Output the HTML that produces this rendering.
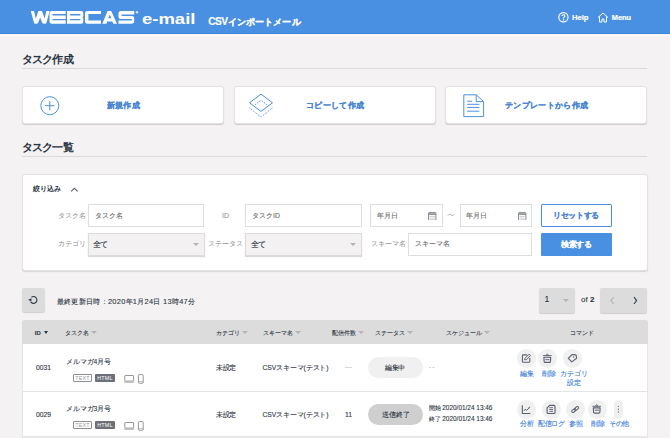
<!DOCTYPE html>
<html><head><meta charset="utf-8">
<style>
*{box-sizing:border-box;margin:0;padding:0}
html,body{width:670px;height:438px;overflow:hidden}
body{background:#f4f2f2;font-family:"Liberation Sans",sans-serif;color:#2b3442;position:relative}
.a{position:absolute;white-space:nowrap}
.hdr{left:0;top:0;width:670px;height:34px;background:#4a90e2;border-bottom:1px solid #3f89e0}
.h2{font-size:11px;letter-spacing:-.7px;font-weight:bold;color:#2a3341;line-height:11px}
.rule{height:1px;background:#dbd9d9;left:22px;width:625.2px}
.card{background:#fff;border-radius:3px;border:1px solid #e3e1e1;box-shadow:0 1px 1px rgba(0,0,0,.16);height:37.8px;top:86px;width:202px}
.ct{font-size:8px;letter-spacing:.35px;-webkit-text-stroke:.15px #4a84d6;font-weight:bold;color:#4a84d6;line-height:9px}
.panel{left:22.3px;top:174px;width:625.5px;height:96.5px;background:#fff;border-radius:3px;border:1px solid #e3e1e1;box-shadow:0 1px 1px rgba(0,0,0,.12)}
.lbl{font-size:6.9px;color:#8a8a8a;line-height:8px}
.inp{background:#fff;border:1px solid #dedede;height:23px}
.sel{background:#f3f1f1;border:1px solid #dcdcdc;height:23px;box-shadow:0 1px 1px rgba(0,0,0,.15)}
.ph{font-size:6.9px;color:#646464;line-height:8px;-webkit-text-stroke:.08px #646464}
.tri{width:0;height:0;border-left:3px solid transparent;border-right:3px solid transparent;border-top:3px solid #b4b4b4}
.th{font-size:6.4px;color:#333c48;line-height:8px;-webkit-text-stroke:.12px #333c48}
.td{font-size:6.8px;color:#2b3442;line-height:8px;-webkit-text-stroke:.1px #2b3442}
.cmd{font-size:6.6px;color:#3d7fd9;line-height:8px;-webkit-text-stroke:.12px #3d7fd9}
.circ{width:19px;height:19px;border-radius:50%;background:#f1f0f0}
</style></head><body>

<!-- header -->
<div class="a hdr"></div>
<div class="a" style="left:0;top:35px;width:670px;height:1px;background:#fdfcf8"></div>
<svg class="a" style="left:0;top:0" width="300" height="34" viewBox="0 0 300 34">
  <g fill="#fff">
    <!-- W -->
    <path d="M30.8 11 L34 11 L35.8 18.4 L38.4 11.1 L42 11.1 L44.6 18.4 L46.4 11 L49.6 11 L46.6 22.2 Q46.2 23.7 44.9 23.7 L43.6 23.7 Q42.5 23.7 42.1 22.6 L40.2 17.6 L38.3 22.6 Q37.9 23.7 36.8 23.7 L35.5 23.7 Q34.2 23.7 33.8 22.2 Z"/>
    <!-- E -->
    <path d="M52 11 L65.7 11 L65.7 14 L52.4 14 L52.4 15.4 L65.7 15.4 L65.7 18.9 L52.4 18.9 L52.4 20.3 L65.7 20.3 L65.7 23.7 L52 23.7 Q49.5 23.7 49.5 21.2 L49.5 13.5 Q49.5 11 52 11 Z"/>
    <!-- B -->
    <path d="M67 11 L81 11 Q83.3 11 83.3 13.3 L83.3 15.5 Q83.3 16.8 82.4 17.3 Q83.3 17.8 83.3 19.1 L83.3 21.4 Q83.3 23.7 81 23.7 L67 23.7 Z M70.1 14 L70.1 15.4 L80.4 15.4 L80.4 14 Z M70.1 18.9 L70.1 20.3 L80.4 20.3 L80.4 18.9 Z" fill-rule="evenodd"/>
    <!-- C -->
    <path d="M87.5 11 L101 11 L101 14 L88.4 14 L88.4 20.5 L101 20.5 L101 23.7 L87.5 23.7 Q85 23.7 85 21.2 L85 13.5 Q85 11 87.5 11 Z"/>
    <!-- A -->
    <path d="M107.6 11 L111.2 11 L117 23.7 L113.3 23.7 L112.4 21.4 L107.3 21.4 L106.4 23.7 L102.3 23.7 Z M108.3 18.2 L111.3 18.2 L109.8 14.6 Z" fill-rule="evenodd"/>
    <!-- S -->
    <path d="M121 11 L134.2 11 L134.2 14.6 L121.6 14.6 L121.6 16 L131.8 16 Q134.2 16 134.2 18.4 L134.2 21.3 Q134.2 23.7 131.8 23.7 L118.5 23.7 L118.5 20.5 L131.8 20.5 L131.8 19 L121 19 Q118.5 19 118.5 16.5 L118.5 13.5 Q118.5 11 121 11 Z"/>
    <circle cx="137" cy="12.2" r="1.25" fill="#d4e4f8"/>
  </g>
</svg>
<div class="a" style="left:141.5px;top:11.3px;font-size:14px;font-weight:bold;color:#fff;line-height:16px;transform:scaleX(1.32);transform-origin:0 0">e-mail</div>
<div class="a" style="left:208.2px;top:15.5px;font-size:9.4px;font-weight:bold;color:#fff;-webkit-text-stroke:.15px #fff;line-height:11px"><span style="font-size:10.2px;letter-spacing:-.55px">CSV</span><span style="letter-spacing:.15px">インポートメール</span></div>
<svg class="a" style="left:557px;top:11px" width="13" height="13" viewBox="0 0 13 13"><circle cx="6.4" cy="6.2" r="4.65" fill="none" stroke="#fff" stroke-width="1.15"/><path d="M5 5.1 Q5 3.75 6.45 3.75 Q7.9 3.75 7.9 5 Q7.9 5.8 7.05 6.2 Q6.45 6.5 6.45 7.4" fill="none" stroke="#fff" stroke-width="1.2"/><circle cx="6.45" cy="8.8" r=".7" fill="#fff"/></svg>
<div class="a" style="left:572px;top:13px;font-size:7.6px;font-weight:bold;color:#fff;-webkit-text-stroke:.2px #fff;line-height:9px">Help</div>
<svg class="a" style="left:597px;top:12px" width="12" height="11" viewBox="0 0 12 11"><path d="M1 5.5 L6 1 L11 5.5 M2.5 4.5 V10 H5 V7 H7 V10 H9.5 V4.5" fill="none" stroke="#fff" stroke-width="1" stroke-linejoin="round"/></svg>
<div class="a" style="left:611.8px;top:13px;font-size:7.4px;font-weight:bold;color:#fff;-webkit-text-stroke:.2px #fff;line-height:9px">Menu</div>

<!-- section 1 -->
<div class="a h2" style="left:21.5px;top:53.5px">タスク作成</div>
<div class="a rule" style="top:68px"></div>

<div class="a card" style="left:22px"></div>
<div class="a card" style="left:233.5px"></div>
<div class="a card" style="left:445.3px"></div>
<svg class="a" style="left:38px;top:94px" width="24" height="24" viewBox="0 0 24 24"><circle cx="11.8" cy="11.7" r="9" fill="none" stroke="#4a90e2" stroke-width="1"/><path d="M7.2 11.7 H16.4 M11.8 7.1 V16.3" stroke="#4a90e2" stroke-width="1"/></svg>
<div class="a ct" style="left:106.5px;top:101px">新規作成</div>
<svg class="a" style="left:246px;top:91px" width="30" height="30" viewBox="0 0 30 30"><path d="M15 3.1 L26.5 11.8 L15 20.4 L3.5 11.8 Z" fill="none" stroke="#4a90e2" stroke-width="1"/><path d="M9.2 13.6 L15 9.4 L20.8 13.6 M3.5 16.7 L15 26.2 L26.5 16.7" fill="none" stroke="#4a90e2" stroke-width="1" stroke-dasharray="1.1 1.1"/></svg>
<div class="a ct" style="left:306px;top:101px">コピーして作成</div>
<svg class="a" style="left:460px;top:92px" width="28" height="28" viewBox="0 0 28 28"><path d="M3.8 2.8 H16.2 L23.6 9.6 V24.6 H3.8 Z M16.2 2.8 V9.6 H23.6" fill="none" stroke="#4a90e2" stroke-width="1" stroke-linejoin="round"/><path d="M7.1 9.2 H12 M7.1 12.3 H19.4 M7.1 15.4 H19.4 M7.1 19.2 H19.4" stroke="#4a90e2" stroke-width="1"/></svg>
<div class="a ct" style="left:505px;top:101px">テンプレートから作成</div>

<!-- section 2 -->
<div class="a h2" style="left:21.5px;top:141.5px">タスク一覧</div>
<div class="a rule" style="top:156px"></div>

<div class="a panel"></div>
<div class="a" style="left:33px;top:185.2px;font-size:7px;font-weight:bold;color:#2b3442;line-height:8px">絞り込み</div>
<svg class="a" style="left:70px;top:185.5px" width="9" height="7" viewBox="0 0 9 7"><path d="M1.2 5.4 L4.4 2.2 L7.6 5.4" fill="none" stroke="#505864" stroke-width="1.15"/></svg>

<div class="a lbl" style="left:57.5px;top:211.5px">タスク名</div>
<div class="a inp" style="left:88px;top:204px;width:116px"></div>
<div class="a ph" style="left:95px;top:211.5px">タスク名</div>
<div class="a lbl" style="left:222px;top:211.5px">ID</div>
<div class="a inp" style="left:244.8px;top:204px;width:117.2px"></div>
<div class="a ph" style="left:252px;top:211.5px">タスクID</div>
<div class="a inp" style="left:370px;top:204px;width:72.5px"></div>
<div class="a ph" style="left:376.5px;top:211.5px">年月日</div>
<svg class="a" style="left:427px;top:211px" width="10" height="9" viewBox="0 0 10 9"><rect x="1.5" y="1.6" width="7.4" height="7.6" rx=".6" fill="none" stroke="#868b93" stroke-width="1"/><path d="M1.5 3.1 H8.9" stroke="#868b93" stroke-width="1.6"/><path d="M3.2 .9 V2 M7.2 .9 V2" stroke="#868b93" stroke-width=".9"/><path d="M2.6 5.5 H7.8 M2.6 7.2 H7.8" stroke="#c4c6ca" stroke-width=".8"/></svg>
<svg class="a" style="left:446px;top:211px" width="10" height="8" viewBox="0 0 10 8"><path d="M2 4.5 C3 3 4 3 5 3.9 C6 4.8 7 4.8 8 3.4" fill="none" stroke="#8d8d8d" stroke-width=".75"/></svg>
<div class="a inp" style="left:460px;top:204px;width:71.5px"></div>
<div class="a ph" style="left:466px;top:211.5px">年月日</div>
<svg class="a" style="left:517px;top:211px" width="10" height="9" viewBox="0 0 10 9"><rect x="1.5" y="1.6" width="7.4" height="7.6" rx=".6" fill="none" stroke="#868b93" stroke-width="1"/><path d="M1.5 3.1 H8.9" stroke="#868b93" stroke-width="1.6"/><path d="M3.2 .9 V2 M7.2 .9 V2" stroke="#868b93" stroke-width=".9"/><path d="M2.6 5.5 H7.8 M2.6 7.2 H7.8" stroke="#c4c6ca" stroke-width=".8"/></svg>
<div class="a" style="left:541px;top:204px;width:71px;height:23px;border:1px solid #4a90e2;background:#fff;border-radius:1px"></div>
<div class="a" style="left:553px;top:212px;font-size:8px;letter-spacing:-.35px;font-weight:bold;color:#4a84d6;-webkit-text-stroke:.1px #4a84d6;line-height:8px">リセットする</div>

<div class="a lbl" style="left:57.5px;top:240px">カテゴリ</div>
<div class="a sel" style="left:88px;top:233px;width:117px"></div>
<div class="a td" style="left:93.2px;top:240.5px;font-size:8px;letter-spacing:-.8px">全て</div>
<div class="a tri" style="left:192.5px;top:243px"></div>
<div class="a lbl" style="left:207.5px;top:240px">ステータス</div>
<div class="a sel" style="left:244.8px;top:233px;width:117.7px"></div>
<div class="a td" style="left:250.5px;top:240.5px;font-size:8px;letter-spacing:-.8px">全て</div>
<div class="a tri" style="left:350px;top:243px"></div>
<div class="a lbl" style="left:370.5px;top:240px">スキーマ名</div>
<div class="a inp" style="left:407.5px;top:233px;width:124px"></div>
<div class="a ph" style="left:414.5px;top:240px">スキーマ名</div>
<div class="a" style="left:541px;top:233px;width:71px;height:22.5px;background:#4a90e2;border-radius:1px"></div>
<div class="a" style="left:561px;top:241px;font-size:8px;letter-spacing:-.35px;font-weight:bold;color:#fff;-webkit-text-stroke:.1px #fff;line-height:8px">検索する</div>

<!-- toolbar -->
<div class="a" style="left:22px;top:288px;width:23px;height:24px;background:#dcdcdc;border-radius:2px;box-shadow:0 1px 1px rgba(0,0,0,.15)"></div>
<svg class="a" style="left:0;top:280px" width="60" height="40" viewBox="0 280 60 40"><path d="M31.4 297.2 A3.45 3.45 0 1 1 30.6 301.9" fill="none" stroke="#2c3846" stroke-width="1.1"/><path d="M28.1 299.7 L31.5 298.2 L31.3 301.5 Z" fill="#2c3846"/></svg>
<div class="a td" style="left:56.8px;top:297.5px;font-size:7.4px;letter-spacing:.3px">最終更新日時：2020年1月24日 13時47分</div>

<div class="a" style="left:539px;top:288px;width:35.5px;height:25px;background:#dcdcdc;border-radius:2px;box-shadow:0 1px 1px rgba(0,0,0,.15)"></div>
<div class="a td" style="left:544.6px;top:294.8px;font-size:8.6px;line-height:9px">1</div>
<div class="a tri" style="left:563px;top:299px"></div>
<div class="a td" style="left:581px;top:295px;font-size:8px;line-height:9px">of <b>2</b></div>
<div class="a" style="left:600px;top:288px;width:47px;height:25px;background:#dcdcdc;border-radius:2px;box-shadow:0 1px 1px rgba(0,0,0,.15)"></div>
<svg class="a" style="left:607px;top:295px" width="34" height="11" viewBox="0 0 34 11"><path d="M6.6 2.2 L4 5.6 L6.6 9" fill="none" stroke="#b4b6ba" stroke-width="1.2"/><path d="M27 2.2 L29.6 5.6 L27 9" fill="none" stroke="#3a4656" stroke-width="1.2"/></svg>

<!-- table -->
<div class="a" style="left:22px;top:343px;width:625.5px;height:95px;background:#fff;border-left:1px solid #e6e6e6;border-right:1px solid #e6e6e6"></div>
<div class="a" style="left:22px;top:320px;width:625.5px;height:23.8px;background:#dcdcdc;border-radius:2.5px 2.5px 0 0"></div>
<div class="a th" style="left:34.8px;top:329px;font-size:5.9px;font-weight:bold;-webkit-text-stroke:.15px #2b3442">ID</div>
<div class="a tri" style="left:43.8px;top:331.2px;border-top-color:#2b3442;border-left-width:2.7px;border-right-width:2.7px;border-top-width:3.2px"></div>
<div class="a th" style="left:65px;top:328.5px">タスク名</div>
<div class="a tri" style="left:91px;top:331px"></div>
<div class="a th" style="left:216px;top:328.5px">カテゴリ</div>
<div class="a tri" style="left:242px;top:331px"></div>
<div class="a th" style="left:262.5px;top:328.5px">スキーマ名</div>
<div class="a tri" style="left:294.5px;top:331px"></div>
<div class="a th" style="left:332px;top:328.5px">配信件数</div>
<div class="a tri" style="left:357.5px;top:331px"></div>
<div class="a th" style="left:375px;top:328.5px">ステータス</div>
<div class="a tri" style="left:406.5px;top:331px"></div>
<div class="a th" style="left:446px;top:328.5px">スケジュール</div>
<div class="a tri" style="left:484px;top:331px"></div>
<div class="a th" style="left:569.5px;top:328.5px">コマンド</div>

<div class="a" style="left:22px;top:391px;width:625.5px;height:1px;background:#e4e4e4"></div>
<div class="a" style="left:22px;top:436px;width:625.5px;height:2px;background:#e8e8e8"></div>

<!-- row 1 -->
<div class="a td" style="left:36px;top:364px">0031</div>
<div class="a td" style="left:65.5px;top:358px">メルマガ4月号</div>
<div class="a" style="left:73.3px;top:374.2px;width:18.6px;height:8.1px;border:.8px solid #8f8f8f;border-radius:1px;font-size:5.3px;letter-spacing:.25px;color:#9a9a9a;line-height:6.5px;text-align:center">TEXT</div>
<div class="a" style="left:95.1px;top:374.2px;width:19.7px;height:8.1px;background:#6d7079;border-radius:1px;font-size:5.3px;letter-spacing:.25px;color:#fff;line-height:8px;text-align:center">HTML</div>
<svg class="a" style="left:123px;top:373px" width="23" height="12" viewBox="0 0 23 12"><rect x="1.8" y="2.5" width="8.8" height="5.6" rx=".5" fill="none" stroke="#8b8b8b" stroke-width=".9"/><path d="M1.1 9.2 H11.3" stroke="#9a9a9a" stroke-width=".8"/><rect x="15.4" y="1.6" width="4.8" height="8.6" rx=".7" fill="none" stroke="#8b8b8b" stroke-width=".9"/><path d="M15.4 8.6 H20.2" stroke="#9a9a9a" stroke-width=".6"/></svg>
<div class="a td" style="left:216px;top:364px;letter-spacing:-.4px">未設定</div>
<div class="a td" style="left:262.5px;top:364px;letter-spacing:-.13px">CSVスキーマ(テスト)</div>
<div class="a td" style="left:345px;top:363px;color:#aaa;-webkit-text-stroke:0">---</div>
<div class="a" style="left:367.5px;top:357px;width:55px;height:21px;border-radius:11px;background:#f1f0f0"></div>
<div class="a td" style="left:385px;top:364px;font-size:7px;letter-spacing:-.35px">編集中</div>
<div class="a td" style="left:428.8px;top:363px;color:#aaa;-webkit-text-stroke:0;letter-spacing:-.3px">- -</div>

<div class="a circ" style="left:516.5px;top:348.5px"></div>
<div class="a circ" style="left:538px;top:348.5px"></div>
<div class="a circ" style="left:563px;top:348.5px"></div>
<svg class="a" style="left:0;top:0" width="670" height="438" viewBox="0 0 670 438">
  <g fill="none" stroke="#596070" stroke-width="1.1" stroke-linejoin="round">
    <path d="M527.2 354.9 H523.3 Q522.4 354.9 522.4 355.8 V361.4 Q522.4 362.3 523.3 362.3 H528.9 Q529.8 362.3 529.8 361.4 V358"/>
    <path d="M524.7 359.9 L525.1 358.2 L529.1 354.2 L530.5 355.6 L526.5 359.6 Z" stroke-width="1"/>
    <path d="M543 355.6 H551.6" stroke-width=".9"/>
    <path d="M546.1 355.4 L547.3 353.7 L548.5 355.4 Z" stroke-width=".7"/>
    <path d="M543.9 357.2 H550.7 L550.45 361.6 Q550.35 362.4 549.55 362.4 H545.05 Q544.25 362.4 544.15 361.6 Z"/>
    <rect x="545.3" y="358.9" width="4.2" height="1.3" fill="#596070" stroke="none" opacity=".75"/>
    <path d="M568.3 358.4 L572.2 354.5 L575.4 354.9 Q576.2 355.1 576.3 355.9 L576.6 358.2 L571.8 361.9 Z"/>
  </g>
  <circle cx="573.6" cy="356.9" r=".75" fill="#596070"/>
</svg>
<div class="a cmd" style="left:520px;top:369.5px">編集</div>
<div class="a cmd" style="left:541.5px;top:369.5px">削除</div>
<div class="a cmd" style="left:560px;top:369.5px">カテゴリ</div>
<div class="a cmd" style="left:566.5px;top:378.5px">設定</div>

<!-- row 2 -->
<div class="a td" style="left:36px;top:410.5px">0029</div>
<div class="a td" style="left:65.5px;top:404.5px">メルマガ3月号</div>
<div class="a" style="left:73.3px;top:420.7px;width:18.6px;height:8.1px;border:.8px solid #8f8f8f;border-radius:1px;font-size:5.3px;letter-spacing:.25px;color:#9a9a9a;line-height:6.5px;text-align:center">TEXT</div>
<div class="a" style="left:95.1px;top:420.7px;width:19.7px;height:8.1px;background:#6d7079;border-radius:1px;font-size:5.3px;letter-spacing:.25px;color:#fff;line-height:8px;text-align:center">HTML</div>
<svg class="a" style="left:123px;top:419.5px" width="23" height="12" viewBox="0 0 23 12"><rect x="1.8" y="2.5" width="8.8" height="5.6" rx=".5" fill="none" stroke="#8b8b8b" stroke-width=".9"/><path d="M1.1 9.2 H11.3" stroke="#9a9a9a" stroke-width=".8"/><rect x="15.4" y="1.6" width="4.8" height="8.6" rx=".7" fill="none" stroke="#8b8b8b" stroke-width=".9"/><path d="M15.4 8.6 H20.2" stroke="#9a9a9a" stroke-width=".6"/></svg>
<div class="a td" style="left:216px;top:410.5px;letter-spacing:-.4px">未設定</div>
<div class="a td" style="left:262.5px;top:410.5px;letter-spacing:-.13px">CSVスキーマ(テスト)</div>
<div class="a td" style="left:345px;top:410.5px">11</div>
<div class="a" style="left:368px;top:404px;width:54.5px;height:21px;border-radius:11px;background:#cfcfcf"></div>
<div class="a td" style="left:381.5px;top:410.5px;font-size:6.5px">送信終了</div>
<div class="a td" style="left:428.5px;top:404px;font-size:6.45px">開始 2020/01/24 13:46</div>
<div class="a td" style="left:428.5px;top:414.5px;font-size:6.45px">終了 2020/01/24 13:46</div>

<div class="a circ" style="left:516.5px;top:400px"></div>
<div class="a circ" style="left:541.5px;top:400px"></div>
<div class="a circ" style="left:565.5px;top:400px"></div>
<div class="a circ" style="left:587.5px;top:400px"></div>
<div class="a" style="left:614px;top:400px;width:9px;height:19px;border-radius:4.5px;background:#f1f0f0"></div>
<svg class="a" style="left:0;top:0" width="670" height="438" viewBox="0 0 670 438">
  <g fill="none" stroke="#596070" stroke-width="1.1" stroke-linejoin="round">
    <path d="M522.3 405.2 V413.5 H530.4"/>
    <path d="M523.8 411 L525.2 409.2 L526.7 410.3 L529 407.9" stroke-width="1"/>
    <path d="M549.6 405.3 H553.9 Q555 405.3 555 406.4 V412.5 Q555 413.5 554 413.5 H548.1 Q547.1 413.5 547.1 412.5 V407.8 Z" stroke-width="1.15"/>
    <path d="M549.3 407.7 H553 M549.3 409.5 H553 M549.3 411.4 H553" stroke-width=".9"/>
    <g transform="rotate(-38 575.2 409.5)" stroke-width="1"><rect x="571.1" y="408.3" width="4.7" height="2.4" rx="1.2"/><rect x="574.6" y="408.3" width="4.7" height="2.4" rx="1.2"/></g>
    <path d="M592.4 406.3 H601" stroke-width=".9"/>
    <path d="M595.5 406.1 L596.7 404.4 L597.9 406.1 Z" stroke-width=".7"/>
    <path d="M593.3 407.9 H600.1 L599.85 412.3 Q599.75 413.1 598.95 413.1 H594.45 Q593.65 413.1 593.55 412.3 Z"/>
    <rect x="594.7" y="409.6" width="4.2" height="1.3" fill="#596070" stroke="none" opacity=".75"/>
  </g>
  <path d="M528.2 407.2 L530 406.6 L529.5 408.5 Z" fill="#596070"/>
  <g fill="#596070"><circle cx="618.4" cy="406.5" r=".6"/><circle cx="618.4" cy="409.2" r=".6"/><circle cx="618.4" cy="411.9" r=".6"/></g>
</svg>
<div class="a cmd" style="left:519.5px;top:420px">分析</div>
<div class="a cmd" style="left:538px;top:420px;letter-spacing:-.3px">配信ログ</div>
<div class="a cmd" style="left:568.5px;top:420px">参照</div>
<div class="a cmd" style="left:590.5px;top:420px">削除</div>
<div class="a cmd" style="left:609px;top:420px;letter-spacing:-.45px">その他</div>

</body></html>
